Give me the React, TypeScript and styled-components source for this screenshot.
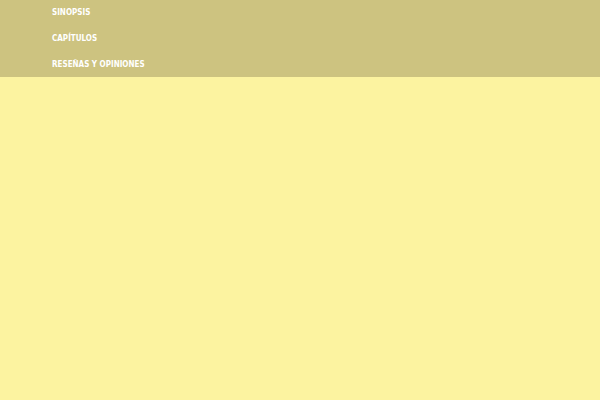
import styled, { createGlobalStyle } from "styled-components";

const GlobalStyle = createGlobalStyle`
  body {
    margin: 0;
    background-color: #fcf3a0;
    font-family: "DejaVu Sans Condensed", "DejaVu Sans", Verdana, sans-serif;
  }
`;

const Nav = styled.nav`
  background-color: #cdc380;
`;

const Menu = styled.ul`
  list-style: none;
  margin: 0;
  padding: 0 0 0 40px;
  display: flex;
  flex-direction: column;
  align-items: flex-start;
  gap: 1px;
`;

const MenuLink = styled.a`
  display: block;
  padding: 4px 12px;
  color: white;
  font-size: 8px;
  font-weight: bold;
  line-height: 17px;
  text-decoration: none;
  text-transform: uppercase;

  &:hover {
    text-decoration: underline;
  }
`;

const links = [
  { label: "Sinopsis", href: "#sinopsis" },
  { label: "Capítulos", href: "#capitulos" },
  { label: "Reseñas y opiniones", href: "#opiniones" },
];

export default function App() {
  return (
    <>
      <GlobalStyle />
      <Nav>
        <Menu>
          {links.map((link) => (
            <li key={link.href}>
              <MenuLink href={link.href}>{link.label}</MenuLink>
            </li>
          ))}
        </Menu>
      </Nav>
    </>
  );
}
